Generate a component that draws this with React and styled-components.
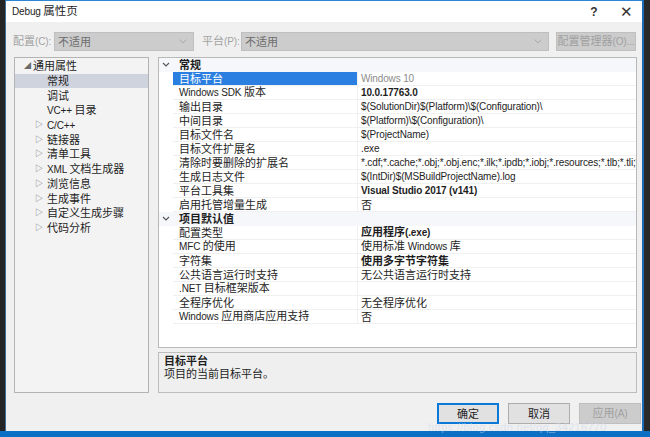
import React from 'react';
import styled, { createGlobalStyle } from 'styled-components';

const GlobalStyle = createGlobalStyle`
  html, body { margin: 0; padding: 0; }
  body { font-family: "Liberation Sans", "Noto Sans CJK SC", sans-serif; }
`;

const Screen = styled.div`
  width: 650px;
  height: 437px;
  display: flex;
  flex-direction: column;
  background: #1e1e1e;
  overflow: hidden;
  position: relative;
`;

const Middle = styled.div`
  flex: 1;
  display: flex;
  min-height: 0;
`;

const LeftEdge = styled.div`
  width: 6px;
  background: #252526;
  border-right: 1px solid #3f6e98;
  box-sizing: border-box;
`;

const RightEdge = styled.div`
  flex: 1;
  background: #2a2a2a;
  border-left: 2px solid #1b6cb5;
`;

const TaskStrip = styled.div`
  height: 6px;
  background: #0b6fc4;
`;

const Dialog = styled.div`
  width: 636px;
  background: #f0f0f0;
  border-top: 1px solid #2b87d3;
  display: flex;
  flex-direction: column;
  box-sizing: border-box;
  font-size: 11px;
  line-height: 14px;
  color: #1e1e1e;
`;

// latin runs of the Windows UI font are narrower than Arial
const Latin = styled.span`
  font-size: 10px;
  letter-spacing: -0.15px;
`;

const cjk = /([\u2e80-\u9fff\u3000-\u303f\uff00-\uffef]+)/;

const Txt = ({ children }) => {
  if (typeof children !== 'string') return children;
  return (
    <span>
      {children.split(cjk).filter(Boolean).map((part, i) =>
        cjk.test(part) ? <React.Fragment key={i}>{part}</React.Fragment> : <Latin key={i}>{part}</Latin>
      )}
    </span>
  );
};

const TitleBar = styled.div`
  height: 21px;
  background: #fff;
  display: flex;
  align-items: center;
  padding-left: 6px;
  font-size: 11.5px;
`;

const Title = styled.span`
  flex: 1;
`;

const TitleButton = styled.span`
  width: 32px;
  text-align: center;
  font-size: ${p => p.$big ? '15px' : '12px'};
  font-weight: ${p => p.$big ? 300 : 600};
  color: #333;
`;

const Toolbar = styled.div`
  display: flex;
  align-items: center;
  height: 19px;
  margin-top: 10px;
  padding-left: 7px;
  white-space: nowrap;
`;

const Label = styled.span`
  color: #a3a3a3;
  width: ${p => p.$w}px;
  flex: none;
`;

const Select = styled.div`
  width: ${p => p.$w}px;
  height: 19px;
  flex: none;
  box-sizing: border-box;
  background: #cccccc;
  border: 1px solid #bfbfbf;
  color: #6d6d6d;
  display: flex;
  align-items: center;
  padding-left: 3px;
  margin-right: ${p => p.$mr}px;
  span { flex: 1; }
  svg { margin-right: 6px; }
`;

const ManagerButton = styled.div`
  width: 80px;
  height: 19px;
  flex: none;
  box-sizing: border-box;
  background: #cccccc;
  border: 1px solid #bfbfbf;
  color: #a0a0a0;
  display: flex;
  align-items: center;
  justify-content: center;
`;

const Main = styled.div`
  display: flex;
  margin-top: 6px;
  padding-left: 8px;
  height: 336px;
`;

const Tree = styled.div`
  width: 135px;
  box-sizing: border-box;
  border: 1px solid #b4b4b4;
  background: #f3f3f3;
  padding-top: 1px;
`;

const TreeItem = styled.div`
  height: 14.7px;
  display: flex;
  align-items: center;
  padding-left: ${p => p.$indent}px;
  background: ${p => p.$selected ? '#cfd3de' : 'transparent'};
  white-space: pre;
`;

const Arrow = styled.span`
  width: ${p => p.$open ? 9 : 12}px;
  font-size: ${p => p.$open ? '7px' : '8px'};
  color: #6a6a6a;
  display: inline-block;
  flex: none;
`;

const RightCol = styled.div`
  width: 479px;
  margin-left: 9px;
  display: flex;
  flex-direction: column;
`;

const Grid = styled.div`
  height: 291px;
  box-sizing: border-box;
  border: 1px solid #b9b9b9;
  background: #fff;
  overflow: hidden;
`;

const CategoryRow = styled.div`
  height: 14px;
  display: flex;
  align-items: center;
  background: #f5f7fa;
  font-weight: 700;
  svg { width: 14px; flex: none; }
  span { padding-left: 6px; }
`;

const PropRow = styled.div`
  height: 14px;
  display: flex;
  margin-left: 14px;
  border-bottom: 1px solid #f0f0f0;
  box-sizing: border-box;
`;

const NameCell = styled.div`
  width: 185px;
  padding-left: 6px;
  box-sizing: border-box;
  display: flex;
  align-items: center;
  background: ${p => p.$selected ? '#2a7fe0' : 'transparent'};
  color: ${p => p.$selected ? '#fff' : '#1e1e1e'};
  border-right: 1px solid #f0f0f0;
  white-space: pre;
`;

const ValueCell = styled.div`
  flex: 1;
  padding-left: 3px;
  display: flex;
  align-items: center;
  white-space: pre;
  overflow: hidden;
  font-weight: ${p => p.$bold ? 700 : 400};
  color: ${p => p.$muted ? '#8c8c8c' : '#1e1e1e'};
`;

const Description = styled.div`
  margin-top: 4px;
  height: 41px;
  box-sizing: border-box;
  border: 1px solid #bdbdbd;
  background: #efefef;
  padding: 2px 5px;
  line-height: 13px;
`;

const DescTitle = styled.div`
  font-weight: 700;
`;

const Footer = styled.div`
  display: flex;
  justify-content: flex-end;
  gap: 9px;
  margin-top: 10px;
  padding-right: 1px;
`;

const Button = styled.div`
  width: 62px;
  height: 21px;
  box-sizing: border-box;
  display: flex;
  align-items: center;
  justify-content: center;
  background: ${p => p.$disabled ? '#cccccc' : '#e1e1e1'};
  border: 1px solid ${p => p.$primary ? '#0a78d7' : p.$disabled ? '#bfbfbf' : '#adadad'};
  box-shadow: ${p => p.$primary ? 'inset 0 0 0 1px #0a78d7' : 'none'};
  color: ${p => p.$disabled ? '#9f9f9f' : '#1e1e1e'};
`;

const Watermark = styled.div`
  position: absolute;
  left: 428px;
  top: 421px;
  font-size: 11px;
  color: rgba(205, 215, 235, 0.55);
  letter-spacing: 0.3px;
  pointer-events: none;
`;

const Chevron = () => (
  <svg width="14" height="10" viewBox="0 0 14 10">
    <path d="M4 3 L7 6 L10 3" fill="none" stroke="#555" strokeWidth="1.1" />
  </svg>
);

const DropArrow = () => (
  <svg width="8" height="5" viewBox="0 0 8 5">
    <path d="M0.5 0.5 L4 4 L7.5 0.5" fill="none" stroke="#aaa" strokeWidth="1" />
  </svg>
);

const treeItems = [
  { text: '通用属性', indent: 9, arrow: '◢', open: true },
  { text: '常规', indent: 32, selected: true },
  { text: '调试', indent: 32 },
  { text: 'VC++ 目录', indent: 32 },
  { text: 'C/C++', indent: 20, arrow: '▷' },
  { text: '链接器', indent: 20, arrow: '▷' },
  { text: '清单工具', indent: 20, arrow: '▷' },
  { text: 'XML 文档生成器', indent: 20, arrow: '▷' },
  { text: '浏览信息', indent: 20, arrow: '▷' },
  { text: '生成事件', indent: 20, arrow: '▷' },
  { text: '自定义生成步骤', indent: 20, arrow: '▷' },
  { text: '代码分析', indent: 20, arrow: '▷' },
];

const sections = [
  {
    title: '常规',
    rows: [
      { name: '目标平台', value: 'Windows 10', selected: true, muted: true },
      { name: 'Windows SDK 版本', value: '10.0.17763.0', bold: true },
      { name: '输出目录', value: '$(SolutionDir)$(Platform)\\$(Configuration)\\' },
      { name: '中间目录', value: '$(Platform)\\$(Configuration)\\' },
      { name: '目标文件名', value: '$(ProjectName)' },
      { name: '目标文件扩展名', value: '.exe' },
      { name: '清除时要删除的扩展名', value: '*.cdf;*.cache;*.obj;*.obj.enc;*.ilk;*.ipdb;*.iobj;*.resources;*.tlb;*.tli;*.tlh' },
      { name: '生成日志文件', value: '$(IntDir)$(MSBuildProjectName).log' },
      { name: '平台工具集', value: 'Visual Studio 2017 (v141)', bold: true },
      { name: '启用托管增量生成', value: '否' },
    ],
  },
  {
    title: '项目默认值',
    rows: [
      { name: '配置类型', value: '应用程序(.exe)', bold: true },
      { name: 'MFC 的使用', value: '使用标准 Windows 库' },
      { name: '字符集', value: '使用多字节字符集', bold: true },
      { name: '公共语言运行时支持', value: '无公共语言运行时支持' },
      { name: '.NET 目标框架版本', value: '' },
      { name: '全程序优化', value: '无全程序优化' },
      { name: 'Windows 应用商店应用支持', value: '否' },
    ],
  },
];

const App = () => {
  return (
    <Screen>
      <GlobalStyle />
      <Middle>
        <LeftEdge />
        <Dialog>
          <TitleBar>
            <Title><Txt>Debug 属性页</Txt></Title>
            <TitleButton>?</TitleButton>
            <TitleButton $big>✕</TitleButton>
          </TitleBar>
          <Toolbar>
            <Label $w={41}><Txt>配置(C):</Txt></Label>
            <Select $w={140} $mr={8}><span>不适用</span><DropArrow /></Select>
            <Label $w={39}><Txt>平台(P):</Txt></Label>
            <Select $w={308} $mr={7}><span>不适用</span><DropArrow /></Select>
            <ManagerButton><Txt>配置管理器(O)...</Txt></ManagerButton>
          </Toolbar>
          <Main>
            <Tree>
              {treeItems.map((t, i) => (
                <TreeItem key={i} $indent={t.indent} $selected={t.selected}>
                  {t.arrow && <Arrow $open={t.open}>{t.arrow}</Arrow>}
                  <Txt>{t.text}</Txt>
                </TreeItem>
              ))}
            </Tree>
            <RightCol>
              <Grid>
                {sections.map(s => (
                  <div key={s.title}>
                    <CategoryRow><Chevron /><span>{s.title}</span></CategoryRow>
                    {s.rows.map(r => (
                      <PropRow key={r.name}>
                        <NameCell $selected={r.selected}><Txt>{r.name}</Txt></NameCell>
                        <ValueCell $bold={r.bold} $muted={r.muted}><Txt>{r.value}</Txt></ValueCell>
                      </PropRow>
                    ))}
                  </div>
                ))}
              </Grid>
              <Description>
                <DescTitle>目标平台</DescTitle>
                <div>项目的当前目标平台。</div>
              </Description>
            </RightCol>
          </Main>
          <Footer>
            <Button $primary>确定</Button>
            <Button>取消</Button>
            <Button $disabled><Txt>应用(A)</Txt></Button>
          </Footer>
        </Dialog>
        <RightEdge />
      </Middle>
      <TaskStrip />
      <Watermark>https://blog.csdn.net/qq_34216770</Watermark>
    </Screen>
  );
};

export default App;
